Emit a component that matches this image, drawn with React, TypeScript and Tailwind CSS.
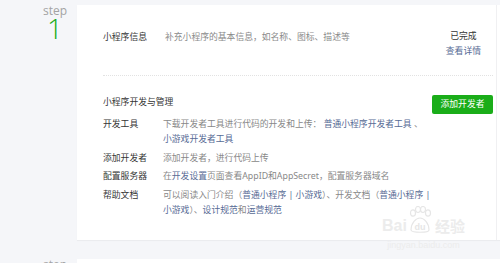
const font = { fontFamily: '"Noto Sans", "Noto Sans CJK SC", sans-serif' };

function Link({ children }: { children: React.ReactNode }) {
  return <span className="text-[#576b95]">{children}</span>;
}

function Row({ label, children }: { label: string; children: React.ReactNode }) {
  return (
    <div className="flex">
      <div className="w-[60px] shrink-0 text-[#353535]">{label}</div>
      <div className="text-[#888]">{children}</div>
    </div>
  );
}

function StepLabel({ num }: { num: string }) {
  return (
    <div className="w-[77px] shrink-0 pl-[33px] flex flex-col items-center" style={{ fontFamily: '"Open Sans", sans-serif' }}>
      <div className="text-[12px] leading-[12px] text-[#a3a3a3]">step</div>
      <div className="text-[28px] leading-[20px] font-light text-[#1aad19] mt-[1px]">{num}</div>
    </div>
  );
}

export default function App() {
  return (
    <div className="relative w-[500px] h-[263px] overflow-hidden bg-[#f5f6f9]" style={font}>
      <div className="flex flex-col gap-[19px] pt-[5px]">
        {/* step 1 */}
        <div className="flex">
          <StepLabel num="1" />
          <div className="flex-1 bg-white shadow-[0_1px_1px_rgba(0,0,0,0.04)]">
            <div className="w-[420px] border-r border-[#f0f0f2] pl-[26px] pr-[3px] pt-[24px] pb-[22px] text-[8.8px] leading-[15px]">
              {/* 小程序信息 */}
              <div className="flex items-start justify-between pr-[12px]">
                <div className="flex mt-[1px]">
                  <div className="w-[62px] shrink-0 text-[#353535]">小程序信息</div>
                  <div className="text-[#8a8a8a]">补充小程序的基本信息，如名称、图标、描述等</div>
                </div>
                <div className="flex flex-col items-center leading-[14.7px]">
                  <div className="text-[#353535]">已完成</div>
                  <Link>查看详情</Link>
                </div>
              </div>

              <div className="mt-[17px] border-t border-dotted border-[#e2e2e2]" />

              {/* 开发与管理 */}
              <div className="mt-[19px] flex items-start justify-between">
                <div className="text-[#353535]">小程序开发与管理</div>
                <button className="h-[19px] w-[61px] rounded-[2px] bg-[#1aad19] text-white text-[8.8px] leading-[19px]">
                  添加开发者
                </button>
              </div>

              <div className="mt-[3px] flex flex-col gap-[3.5px]">
                <Row label="开发工具">
                  <div>
                    下载开发者工具进行代码的开发和上传： <Link>普通小程序开发者工具</Link> 、
                  </div>
                  <div>
                    <Link>小游戏开发者工具</Link>
                  </div>
                </Row>
                <Row label="添加开发者">
                  <div>添加开发者，进行代码上传</div>
                </Row>
                <Row label="配置服务器">
                  <div>
                    在<Link>开发设置</Link>页面查看AppID和AppSecret，配置服务器域名
                  </div>
                </Row>
                <Row label="帮助文档">
                  <div>
                    可以阅读入门介绍（<Link>普通小程序 | 小游戏</Link>）、开发文档（<Link>普通小程序 |</Link>
                  </div>
                  <div>
                    <Link>小游戏</Link>）、<Link>设计规范</Link>和<Link>运营规范</Link>
                  </div>
                </Row>
              </div>
            </div>
          </div>
        </div>

        {/* step 2 */}
        <div className="flex">
          <StepLabel num="2" />
          <div className="flex-1 h-[200px] bg-white" />
        </div>
      </div>

      {/* watermark */}
      <div className="pointer-events-none absolute left-[382px] top-[206px] flex flex-col items-center text-[#ececec]">
        <div className="flex items-end">
          <span className="text-[16px] leading-[16px] font-bold" style={{ fontFamily: '"Liberation Sans", sans-serif' }}>Bai</span>
          <svg width="24" height="28" viewBox="0 0 24 28" className="mx-[1px]">
            <g fill="none" stroke="#e6e6e6" strokeWidth="1.2">
              <ellipse cx="5" cy="7" rx="2.5" ry="3.2" />
              <ellipse cx="10" cy="3.5" rx="2.5" ry="3" />
              <ellipse cx="15" cy="3.5" rx="2.5" ry="3" />
              <ellipse cx="20" cy="7" rx="2.5" ry="3.2" />
              <path d="M3 24 C3 17 8 12 12 12 C16 12 21 17 21 24 C21 27 3 27 3 24 Z" />
            </g>
            <text x="12" y="24" textAnchor="middle" fontSize="9" fontWeight="bold" fill="#e6e6e6" fontFamily="Liberation Sans, sans-serif">du</text>
          </svg>
          <span className="text-[15px] leading-[16px] font-bold ml-[2px]">经验</span>
        </div>
        <div className="text-[9px] leading-[10px] mt-[6px]" style={{ fontFamily: '"Liberation Sans", sans-serif' }}>jingyan.baidu.com</div>
      </div>
    </div>
  );
}
